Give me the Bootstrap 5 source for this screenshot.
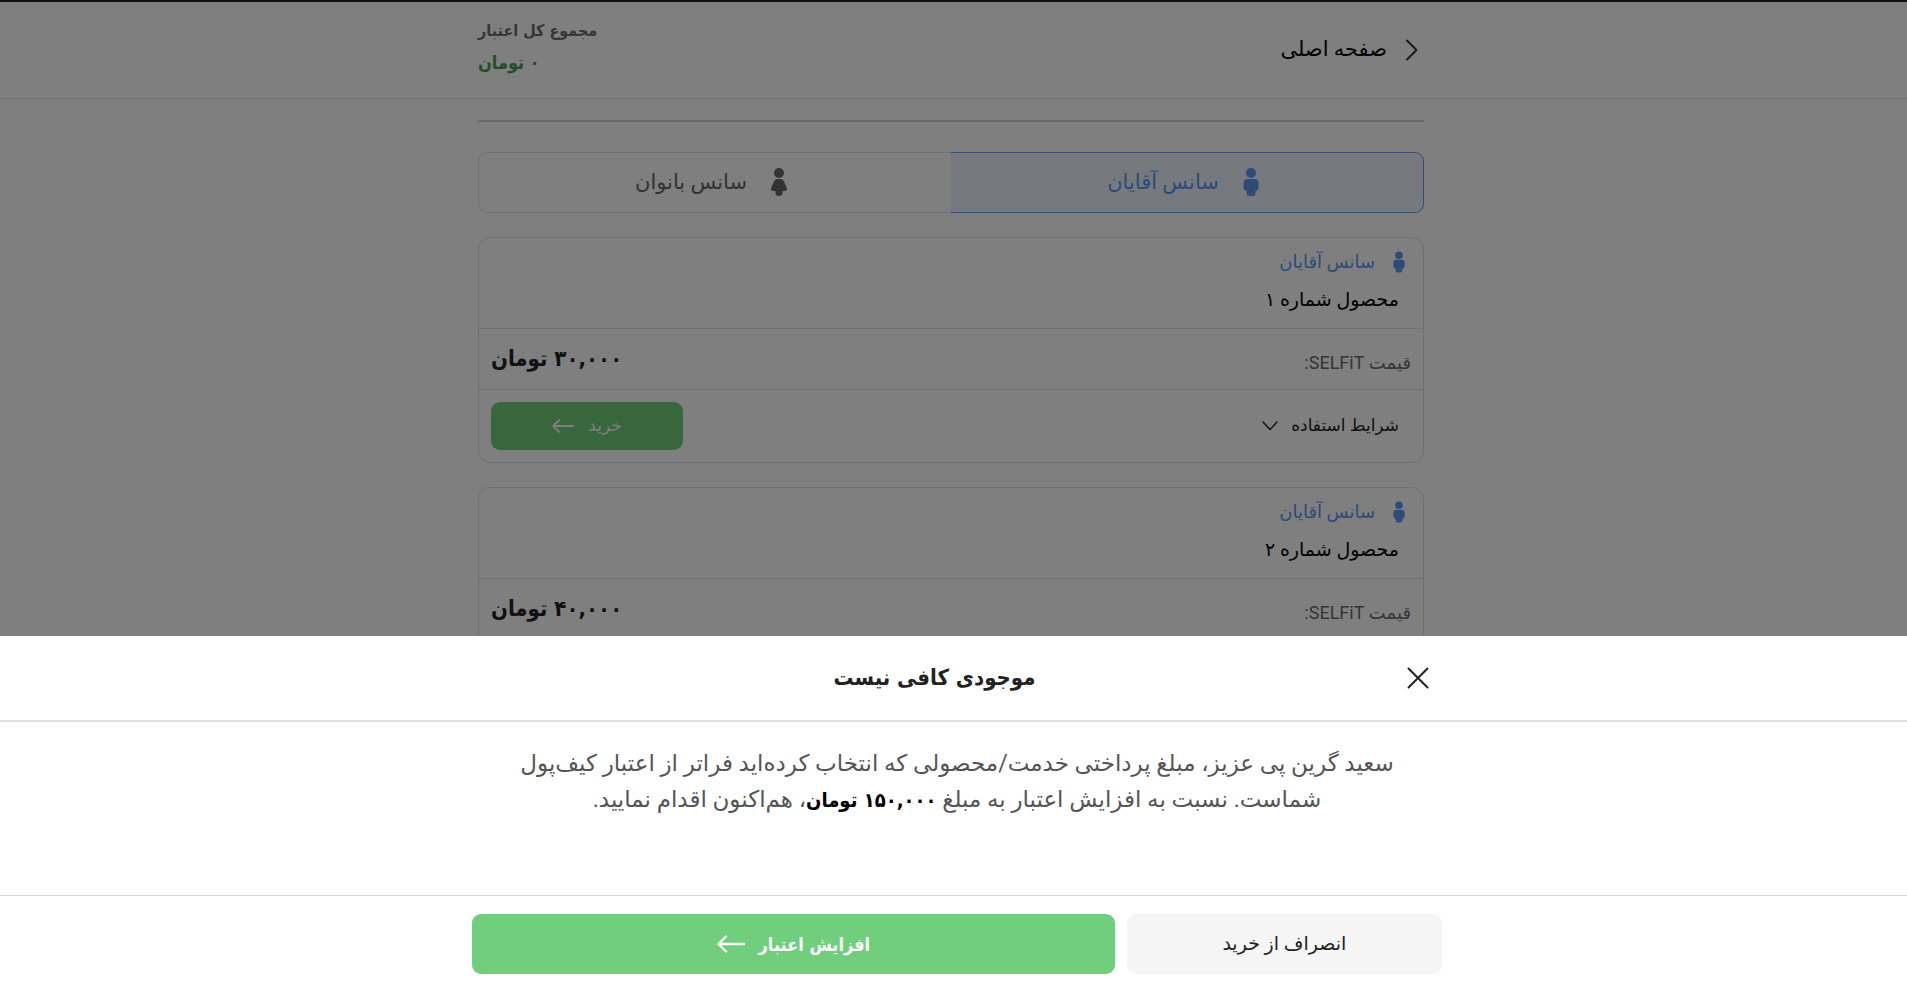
<!DOCTYPE html>
<html lang="fa" dir="rtl">
<head>
<meta charset="utf-8">
<meta name="viewport" content="width=device-width, initial-scale=1">
<title>موجودی کافی نیست</title>
<link href="https://cdn.jsdelivr.net/npm/bootstrap@5.3.0/dist/css/bootstrap.min.css" rel="stylesheet">
<style>
  :root { --ink: #222; --muted-ink: #555; --line: #e0e0e0; --green: #70ce7d; --blue: #5896f0; }
  body { font-family: Roboto, "DejaVu Sans", sans-serif; color: var(--ink); background: #fff; }
  .strong-text { font-family: "DejaVu Sans Condensed", "DejaVu Sans", sans-serif; font-weight: 700; }
  .top-bar, main { padding-right: 5px; }
  .page-col { max-width: 946px; }
  .sheet-col { max-width: 970px; }
  .top-bar { border-top: 2px solid #222; border-bottom: 1px solid var(--line); height: 99px; }
  .fs-s { font-size: 17px; }
  .fs-m { font-size: 18px; }
  .fs-c { font-size: 19px; }
  .fs-l { font-size: 21px; }
  .fs-xl { font-size: 22px; }
  .fs-copy { font-size: 23px; line-height: 36px; color: var(--muted-ink); }
  .fs-total { font-size: 16px; line-height: 30px; color: #6c6c6c; }
  .fs-credit { font-size: 18px; line-height: 34px; color: #489a52; }
  .home-link { gap: 18px; padding-right: 6px; }
  .rule { height: 2px; background: #d2d2d2; margin-top: 21px; margin-bottom: 30px; }
  .seg { height: 61px; }
  .seg .btn { border: 1px solid var(--line); border-radius: 9px; color: #666; gap: 24px; line-height: 28px; padding: 6px 20px 8px 12px; }
  .seg .btn:first-child { border: 1px solid #62a0e0; border-left: 0; border-radius: 0 9px 9px 0; background: #ecf4fe; color: var(--blue); }
  .seg .btn:last-child { border-right: 0; border-radius: 9px 0 0 9px; }
  .product { border: 1px solid var(--line); border-radius: 12px; margin-top: 24px; }
  .product > div + div { border-top: 1px solid var(--line); }
  .product-head { height: 90px; padding: 9px 18px 0 12px; }
  .session { color: var(--blue); gap: 18px; line-height: 30px; }
  .product-name { line-height: 32px; padding-right: 6px; margin-top: 7px; color: #000; }
  .product-price { height: 61px; padding: 0 12px 2px; }
  .product-foot { height: 73px; padding: 0 24px 0 12px; }
  .price-label { padding-top: 8px; color: #6a6a6a; }
  .btn-green, .btn-green:hover { background: var(--green); color: #fff; border: 0; border-radius: 9px; }
  .buy { width: 192px; height: 48px; gap: 14px; }
  .terms { gap: 13px; }
  .offcanvas.offcanvas-bottom { height: auto; border: 0; color: var(--ink); --bs-offcanvas-bg: #fff; }
  .sheet-head, .sheet-body, .sheet-foot { padding-left: 7px; }
  .sheet-head { height: 86px; border-bottom: 2px solid var(--line); }
  .sheet-head .btn { padding: 0; border: 0; margin: 0 13px 0 10px; }
  .sheet-body { height: 173px; padding-top: 24px; }
  .sheet-copy { padding: 0 30px; }
  .sheet-copy b { font-size: 20px; line-height: 24px; color: #000; }
  .sheet-foot { border-top: 1px solid #d8d8d8; padding-top: 18px; padding-bottom: 22px; }
  .sheet-foot .btn { height: 60px; border-radius: 9px; }
  .sheet-foot .row { --bs-gutter-x: 12px; }
  .cancel, .cancel:hover { background: #f5f5f5; color: var(--ink); border: 0; }
  .add { gap: 14px; }
</style>
</head>
<body class="vh-100 overflow-hidden">

<svg class="d-none" aria-hidden="true">
  <symbol id="man" viewBox="0 0 16 28"><circle cx="8" cy="5" r="5"/><rect x=".5" y="11" width="15" height="12" rx="4"/><rect x="3.500" y="14" width="9" height="14" rx="3"/></symbol>
  <symbol id="woman" viewBox="0 0 16 28"><circle cx="8" cy="5" r="5"/><path d="M6 11h4q2 0 3 2.500l2.800 6.500q.8 3-2 3h-2.300v2q0 3-3.500 3t-3.500-3v-2H2.200q-2.800 0-2-3L3 13.500q1-2.500 3-2.500z"/></symbol>
  <symbol id="arrow" viewBox="0 0 28 18"><path d="M27 9H1.500M9 1.500 1.500 9 9 16.500" fill="none" stroke="currentColor" stroke-width="2.400" stroke-linecap="round" stroke-linejoin="round"/></symbol>
</svg>

<header class="top-bar">
  <div class="page-col mx-auto h-100 d-flex justify-content-between align-items-center">
    <a href="#" class="home-link d-flex align-items-center text-decoration-none text-black fs-l">
      <svg width="13" height="22" viewBox="0 0 13 22" fill="none" stroke="#333" stroke-width="2" stroke-linecap="round" stroke-linejoin="round"><path d="M2 1.500 11.500 11 2 20.500"/></svg>
      صفحه اصلی
    </a>
    <div class="strong-text text-start pb-1">
      <div class="fs-total">مجموع کل اعتبار</div>
      <div class="fs-credit">۰ تومان</div>
    </div>
  </div>
</header>

<main>
  <div class="page-col mx-auto">
    <div class="rule"></div>
    <div class="seg d-flex">
      <button type="button" class="btn w-50 d-flex align-items-center justify-content-center fs-l"><svg width="16" height="28" fill="currentColor"><use href="#man"/></svg>سانس آقایان</button>
      <button type="button" class="btn w-50 d-flex align-items-center justify-content-center fs-l"><svg width="16" height="28" fill="currentColor"><use href="#woman"/></svg>سانس بانوان</button>
    </div>

    <article class="product">
      <div class="product-head">
        <div class="session d-flex align-items-center fs-m"><svg width="12" height="22" fill="currentColor"><use href="#man"/></svg>سانس آقایان</div>
        <div class="product-name fs-c">محصول شماره ۱</div>
      </div>
      <div class="product-price d-flex justify-content-between align-items-center">
        <span class="price-label fs-m">قیمت SELFiT:</span>
        <span class="strong-text fs-xl">۳۰,۰۰۰ تومان</span>
      </div>
      <div class="product-foot d-flex justify-content-between align-items-center">
        <button type="button" class="btn terms p-0 border-0 d-flex align-items-center fs-s">شرایط استفاده
          <svg width="16" height="10" viewBox="0 0 16 10" fill="none" stroke="currentColor" stroke-width="1.500" stroke-linecap="round" stroke-linejoin="round"><path d="m1 1 7 7.500L15 1"/></svg>
        </button>
        <button type="button" class="btn btn-green buy d-flex align-items-center justify-content-center fs-s">خرید <svg width="22" height="14"><use href="#arrow"/></svg></button>
      </div>
    </article>

    <article class="product">
      <div class="product-head">
        <div class="session d-flex align-items-center fs-m"><svg width="12" height="22" fill="currentColor"><use href="#man"/></svg>سانس آقایان</div>
        <div class="product-name fs-c">محصول شماره ۲</div>
      </div>
      <div class="product-price d-flex justify-content-between align-items-center">
        <span class="price-label fs-m">قیمت SELFiT:</span>
        <span class="strong-text fs-xl">۴۰,۰۰۰ تومان</span>
      </div>
      <div class="product-foot"></div>
    </article>
  </div>
</main>

<div class="offcanvas-backdrop show"></div>

<section class="offcanvas offcanvas-bottom show" data-bs-backdrop="false" data-bs-scroll="true" tabindex="-1" role="dialog" aria-labelledby="sheetTitle">
  <div class="sheet-head">
    <div class="sheet-col mx-auto h-100 d-flex align-items-center">
      <button type="button" class="btn" aria-label="بستن">
        <svg class="d-block" width="22" height="22" viewBox="0 0 22 22" stroke="#222" stroke-width="2" stroke-linecap="round"><path d="m1.500 1.500 19 19M20.500 1.500l-19 19"/></svg>
      </button>
      <h1 id="sheetTitle" class="strong-text fs-xl mb-0 flex-grow-1 text-center">موجودی کافی نیست</h1>
    </div>
  </div>
  <div class="sheet-body">
    <div class="sheet-col mx-auto">
      <p class="sheet-copy fs-copy text-center mb-0">سعید گرین پی عزیز، مبلغ پرداختی خدمت/محصولی که انتخاب کرده‌اید فراتر از اعتبار کیف‌پول شماست. نسبت به افزایش اعتبار به مبلغ <b class="strong-text d-inline-block">۱۵۰,۰۰۰ تومان</b>، هم‌اکنون اقدام نمایید.</p>
    </div>
  </div>
  <div class="sheet-foot">
    <div class="sheet-col mx-auto">
      <div class="row">
        <div class="col-4"><button type="button" class="btn cancel w-100 fs-c">انصراف از خرید</button></div>
        <div class="col-8"><button type="button" class="btn btn-green add w-100 d-flex align-items-center justify-content-center fs-m strong-text">افزایش اعتبار <svg width="28" height="18"><use href="#arrow"/></svg></button></div>
      </div>
    </div>
  </div>
</section>

<script src="https://cdn.jsdelivr.net/npm/bootstrap@5.3.0/dist/js/bootstrap.bundle.min.js"></script>
</body>
</html>
